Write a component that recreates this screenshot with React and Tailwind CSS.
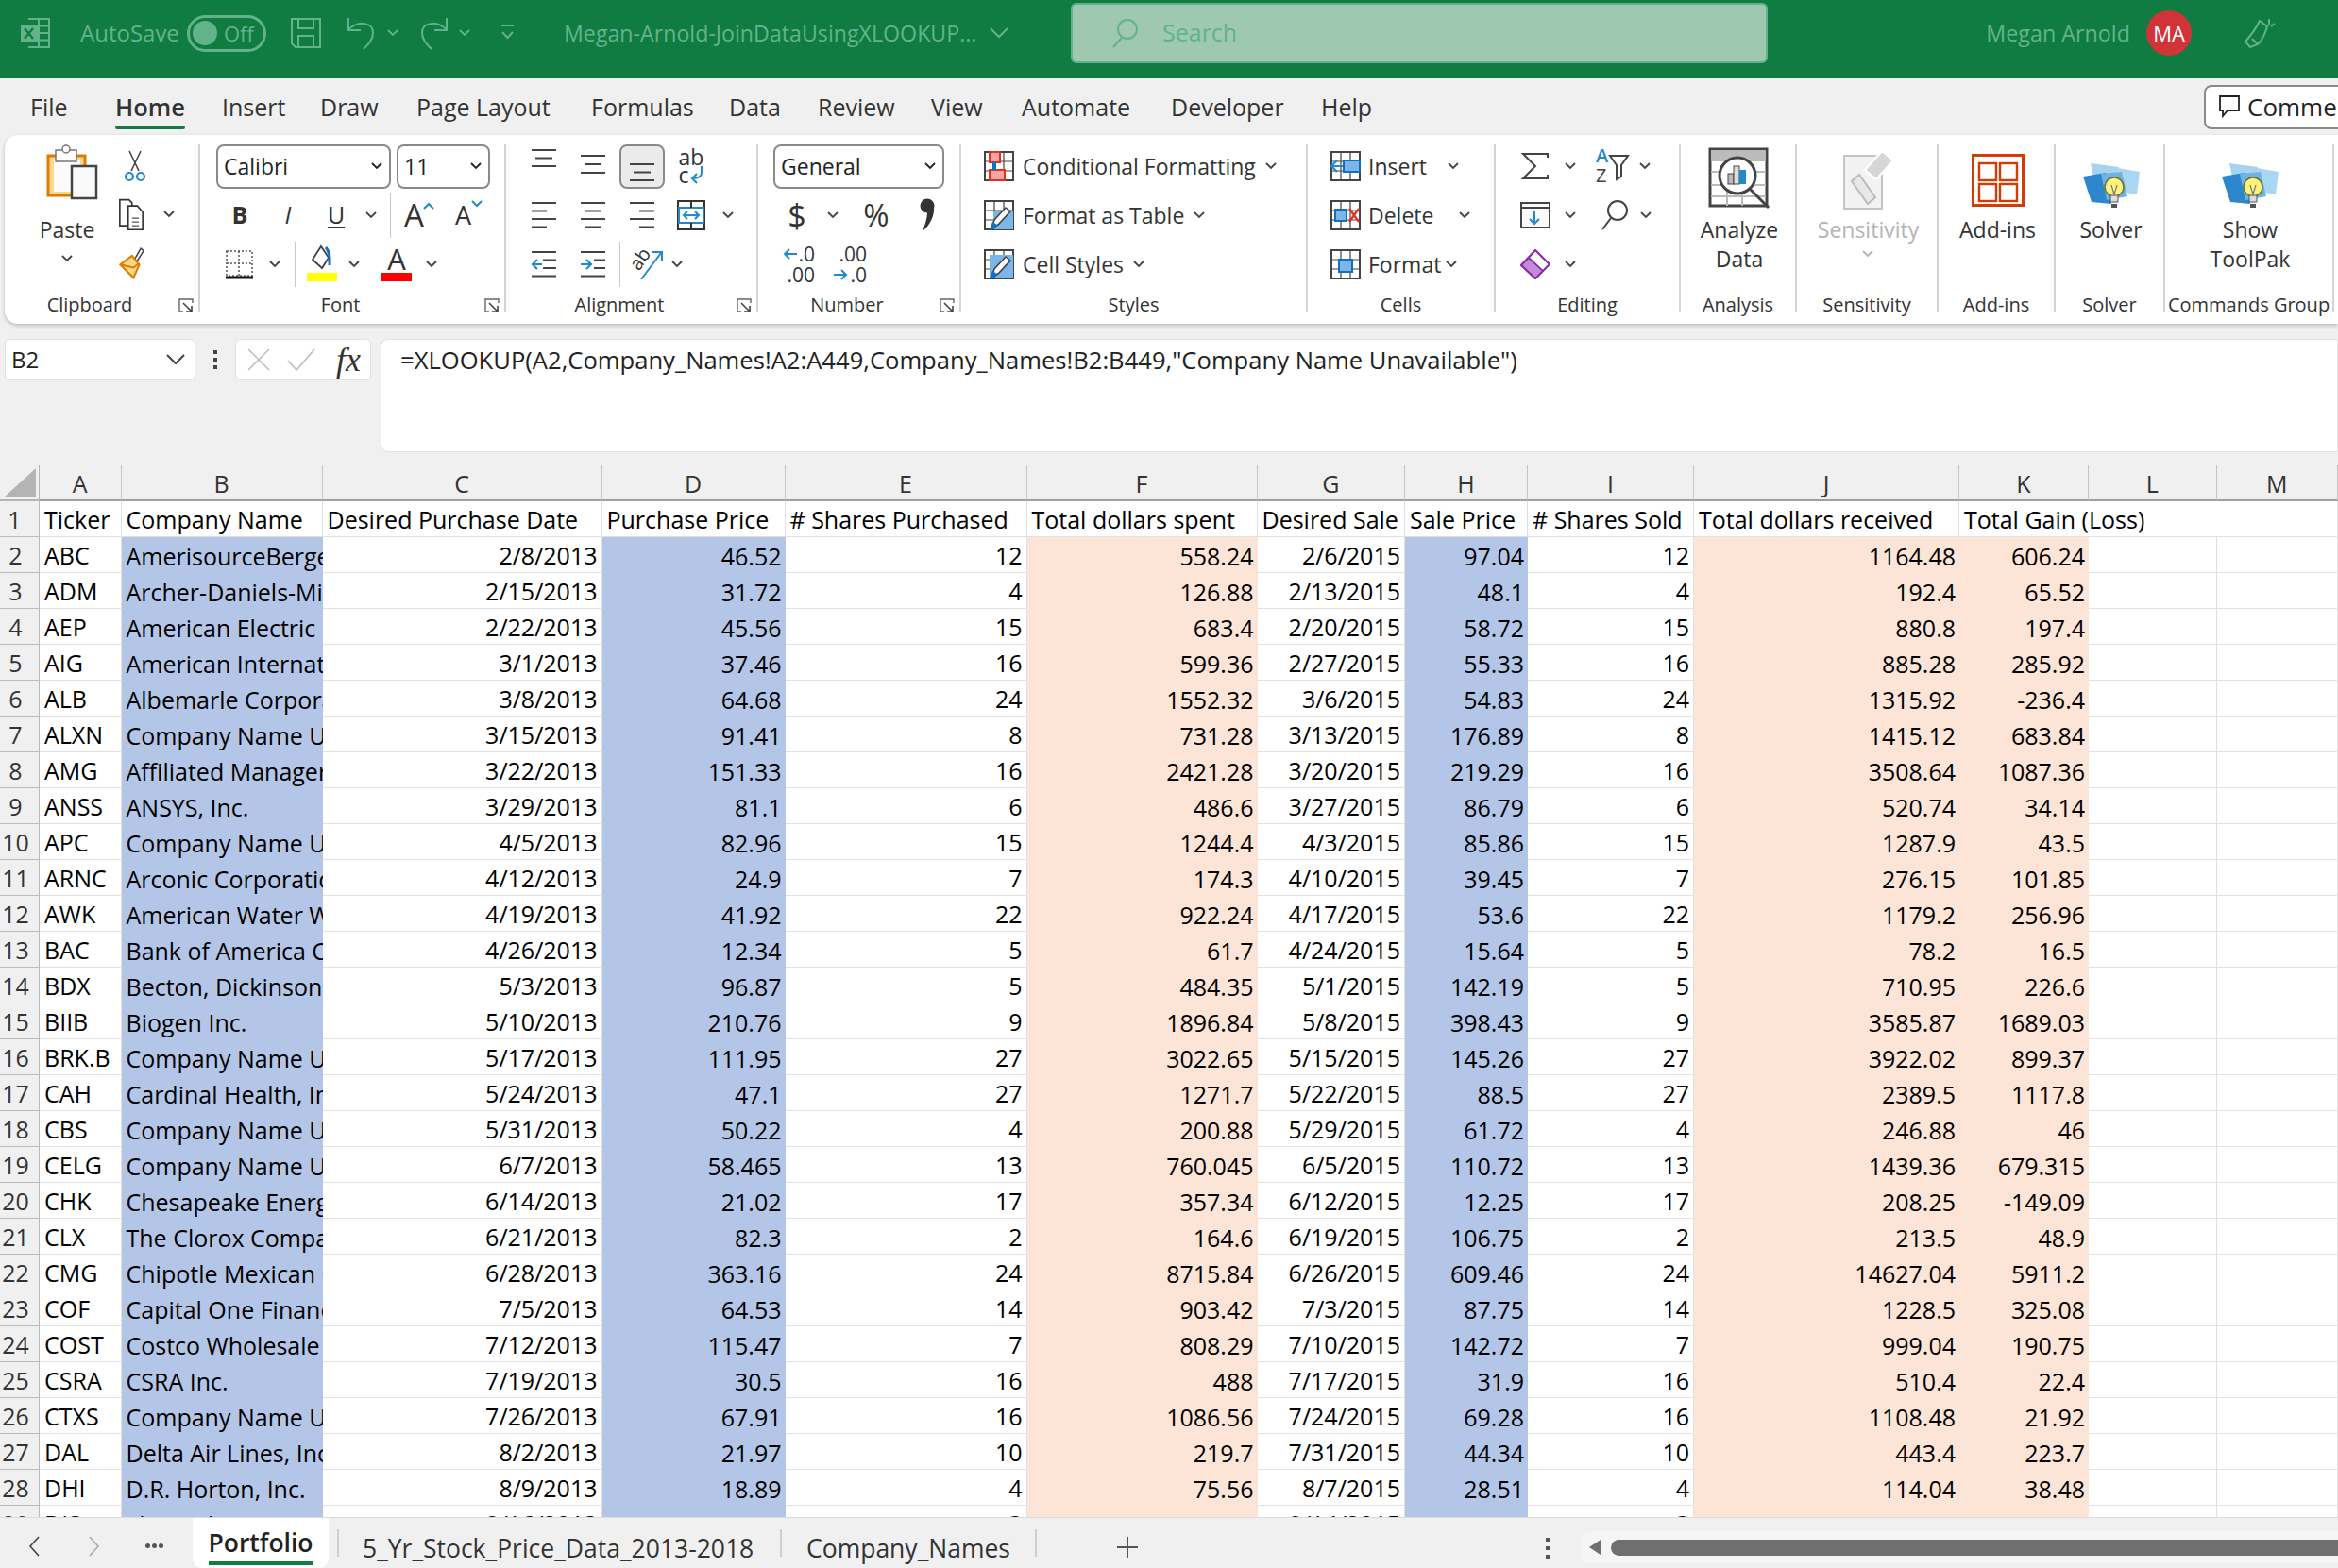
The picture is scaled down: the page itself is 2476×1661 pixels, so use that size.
import React from "react";

const dim = "#62b38c";
const ink = "#444444";
const blue = "#1e8bcd";

const data = `ABC|AmerisourceBergen Corp|2/8/2013|46.52|12|558.24|2/6/2015|97.04|12|1164.48|606.24
ADM|Archer-Daniels-Midland Co|2/15/2013|31.72|4|126.88|2/13/2015|48.1|4|192.4|65.52
AEP|American Electric Power|2/22/2013|45.56|15|683.4|2/20/2015|58.72|15|880.8|197.4
AIG|American International Group|3/1/2013|37.46|16|599.36|2/27/2015|55.33|16|885.28|285.92
ALB|Albemarle Corporation|3/8/2013|64.68|24|1552.32|3/6/2015|54.83|24|1315.92|-236.4
ALXN|Company Name Unavailable|3/15/2013|91.41|8|731.28|3/13/2015|176.89|8|1415.12|683.84
AMG|Affiliated Managers Group|3/22/2013|151.33|16|2421.28|3/20/2015|219.29|16|3508.64|1087.36
ANSS|ANSYS, Inc.|3/29/2013|81.1|6|486.6|3/27/2015|86.79|6|520.74|34.14
APC|Company Name Unavailable|4/5/2013|82.96|15|1244.4|4/3/2015|85.86|15|1287.9|43.5
ARNC|Arconic Corporation|4/12/2013|24.9|7|174.3|4/10/2015|39.45|7|276.15|101.85
AWK|American Water Works|4/19/2013|41.92|22|922.24|4/17/2015|53.6|22|1179.2|256.96
BAC|Bank of America Corp|4/26/2013|12.34|5|61.7|4/24/2015|15.64|5|78.2|16.5
BDX|Becton, Dickinson and Co|5/3/2013|96.87|5|484.35|5/1/2015|142.19|5|710.95|226.6
BIIB|Biogen Inc.|5/10/2013|210.76|9|1896.84|5/8/2015|398.43|9|3585.87|1689.03
BRK.B|Company Name Unavailable|5/17/2013|111.95|27|3022.65|5/15/2015|145.26|27|3922.02|899.37
CAH|Cardinal Health, Inc.|5/24/2013|47.1|27|1271.7|5/22/2015|88.5|27|2389.5|1117.8
CBS|Company Name Unavailable|5/31/2013|50.22|4|200.88|5/29/2015|61.72|4|246.88|46
CELG|Company Name Unavailable|6/7/2013|58.465|13|760.045|6/5/2015|110.72|13|1439.36|679.315
CHK|Chesapeake Energy|6/14/2013|21.02|17|357.34|6/12/2015|12.25|17|208.25|-149.09
CLX|The Clorox Company|6/21/2013|82.3|2|164.6|6/19/2015|106.75|2|213.5|48.9
CMG|Chipotle Mexican Grill|6/28/2013|363.16|24|8715.84|6/26/2015|609.46|24|14627.04|5911.2
COF|Capital One Financial|7/5/2013|64.53|14|903.42|7/3/2015|87.75|14|1228.5|325.08
COST|Costco Wholesale Corp|7/12/2013|115.47|7|808.29|7/10/2015|142.72|7|999.04|190.75
CSRA|CSRA Inc.|7/19/2013|30.5|16|488|7/17/2015|31.9|16|510.4|22.4
CTXS|Company Name Unavailable|7/26/2013|67.91|16|1086.56|7/24/2015|69.28|16|1108.48|21.92
DAL|Delta Air Lines, Inc.|8/2/2013|21.97|10|219.7|7/31/2015|44.34|10|443.4|223.7
DHI|D.R. Horton, Inc.|8/9/2013|18.89|4|75.56|8/7/2015|28.51|4|114.04|38.48
DIS|The Walt Disney Co|8/16/2013|81.07|3|195.76|8/14/2015|107.16|3|257.08|381.56`
  .split("\n")
  .map((r) => r.split("|"));

const headers = ["Ticker", "Company Name", "Desired Purchase Date", "Purchase Price", "# Shares Purchased", "Total dollars spent", "Desired Sale", "Sale Price", "# Shares Sold", "Total dollars received", "Total Gain (Loss)", "", ""];
const letters = ["A", "B", "C", "D", "E", "F", "G", "H", "I", "J", "K", "L", "M"];

const fills = {
  1: "bg-[#b4c6e7]",
  3: "bg-[#b4c6e7]",
  5: "bg-[#fce4d6]",
  7: "bg-[#b4c6e7]",
  9: "bg-[#fce4d6]",
  10: "bg-[#fce4d6]",
};

function Svg({ w, h, sw, sh, children, className }) {
  return (
    <svg width={sw || w} height={sh || h} viewBox={`0 0 ${w} ${h}`} fill="none" className={className}>
      {children}
    </svg>
  );
}

function Chev({ color = ink, className = "" }) {
  return (
    <Svg w={12} h={8} className={className}>
      <path d="M1 1l5 5 5-5" stroke={color} strokeWidth="1.8" />
    </Svg>
  );
}

function Launcher() {
  return (
    <Svg w={16} h={16}>
      <path d="M15 5V1H1v13h4" stroke="#666" strokeWidth="1.4" />
      <path d="M5 5l9 9M14 8v6H8" stroke="#444" strokeWidth="1.6" />
    </Svg>
  );
}

function Cell52({ w = 52, children }) {
  return <div style={{ width: w }} className="flex items-center justify-center shrink-0">{children}</div>;
}

function Sep() {
  return <div className="w-[1px] h-[48px] bg-[#c8c8c8] shrink-0" />;
}

function Group({ w, label, launcher, children }) {
  return (
    <div style={{ width: w }} className="shrink-0 h-[178px] my-[10px] border-r-2 border-[#d4d4d4] flex flex-col">
      <div className="flex-1 min-h-0">{children}</div>
      <div className="h-[26px] -mb-[5px] flex items-center text-[20px] text-[#333]">
        <div className="flex-1 text-center whitespace-nowrap">{label}</div>
        {launcher && <div className="w-[25px] shrink-0 pl-[4px] -mb-[2px]"><Launcher /></div>}
      </div>
    </div>
  );
}

function Rows({ children, className = "" }) {
  return <div className={`-mt-[3px] flex flex-col ${className}`}>{children}</div>;
}

function Row({ children, className = "" }) {
  return <div className={`h-[52px] flex items-center ${className}`}>{children}</div>;
}

function Select({ w, text }) {
  return (
    <div style={{ width: w }} className="h-[47px] shrink-0 flex items-center justify-between pl-[6px] pr-[7px] border-2 border-[#8a8a8a] rounded-[8px] bg-white text-[23px] text-[#222]">
      <span>{text}</span>
      <Chev color="#222" />
    </div>
  );
}

function AlignLines({ ys, xs, color = ink }) {
  return (
    <Svg w={30} h={44}>
      {ys.map((y, i) => (
        <path key={i} d={`M${xs[i][0]} ${y}H${xs[i][1]}`} stroke={color} strokeWidth="2.2" />
      ))}
    </Svg>
  );
}

function BigGrid({ type }) {
  // small 32px table icons used in the Styles and Cells groups
  return (
    <Svg w={32} h={32}>
      <path d="M1 1h30v30H1z" stroke={ink} strokeWidth="2" fill="#fff" />
      <path d="M1 11h30M1 21h30M11 1v30M21 1v30" stroke={ink} strokeWidth="1.2" />
      {type === "cf" && (
        <>
          <rect x="6" y="1" width="11" height="11" fill="#f8a5a5" stroke="#e0301e" strokeWidth="2" />
          <rect x="6" y="20" width="16" height="11" fill="#f8a5a5" stroke="#e0301e" strokeWidth="2" />
          <path d="M11 12v8" stroke="#1071c4" strokeWidth="4" />
        </>
      )}
      {type === "table" && (
        <>
          <path d="M10 11h21v20H10z" fill="#7cb6e8" />
          <path d="M8 30l3-9 12-13 5 4-13 14z" fill="#fff" stroke={ink} strokeWidth="1.6" />
          <path d="M6 31l3-8 5 3-3 5z" fill="#1071c4" />
        </>
      )}
      {type === "style" && (
        <>
          <path d="M6 6h25v25H6z" fill="#7cb6e8" />
          <path d="M8 30l3-9 12-13 5 4-13 14z" fill="#fff" stroke={ink} strokeWidth="1.6" />
          <path d="M6 31l3-8 5 3-3 5z" fill="#1071c4" />
        </>
      )}
      {type === "insert" && (
        <>
          <rect x="14" y="10" width="17" height="12" fill="#7cb6e8" stroke="#1071c4" strokeWidth="2" />
          <path d="M13 16H2M7 10l-6 6 6 6" stroke={blue} strokeWidth="2.2" fill="#fff" />
        </>
      )}
      {type === "delete" && (
        <>
          <rect x="5" y="10" width="12" height="12" fill="#7cb6e8" stroke="#1071c4" strokeWidth="2" />
          <path d="M20 9l10 14M30 9L20 23" stroke="#e0301e" strokeWidth="2.2" />
        </>
      )}
      {type === "format" && (
        <>
          <rect x="9" y="11" width="14" height="13" fill="#7cb6e8" stroke="#1071c4" strokeWidth="2" />
          <path d="M6 -1h20" stroke={blue} strokeWidth="2" />
        </>
      )}
    </Svg>
  );
}

function SolverIcon() {
  return (
    <Svg w={62} h={50}>
      <path d="M9 1l30 4-1 10H12z" fill="#a7d3f0" />
      <path d="M38 6l23 4-3 24-18-3z" fill="#a9d6f3" />
      <path d="M1 15l24-4 6 33-21-2z" fill="#2e86cc" />
      <path d="M20 12l22-2 6 26-22 4z" fill="#6cb4e4" />
      <circle cx="34" cy="26" r="10" fill="#fff27a" stroke="#6d6d3a" strokeWidth="1.5" />
      <path d="M30 35v7h8v-7z" fill="#ddd" stroke="#555" />
      <path d="M31 44h6v4h-6z" fill="#555" />
      <path d="M31 24l3 10 3-10" stroke="#777" strokeWidth="1.2" />
    </Svg>
  );
}

function ColButton({ icon, lines, gray, chev }) {
  return (
    <div className="h-full flex flex-col items-center pl-[3px]">
      <div className="h-[69px] flex items-end justify-center">{icon}</div>
      <div className={`mt-[6px] text-center text-[23px] leading-[31px] whitespace-nowrap ${gray ? "text-[#b4b4b4]" : "text-[#333]"}`}>
        {lines.map((l) => (
          <div key={l}>{l}</div>
        ))}
        {chev && <div className="flex justify-center mt-[6px]"><Chev color="#b4b4b4" /></div>}
      </div>
    </div>
  );
}

function TitleBar() {
  return (
    <div className="h-[83px] bg-[#107c41] flex items-center pb-[13px] shrink-0 text-[24px] text-[#62b38c]">
      <div className="w-[85px] pl-[21px] shrink-0">
        <Svg w={32} h={32}>
          <path d="M9 1h22v30H9" stroke={dim} strokeWidth="2" />
          <path d="M20 1v30M20 8.5h11M20 16h11M20 23.5h11" stroke={dim} strokeWidth="2" />
          <rect x="1" y="7" width="18" height="18" fill={dim} />
          <path d="M5 11l9 11M14 11L5 22" stroke="#107c41" strokeWidth="2.4" />
        </Svg>
      </div>
      <div className="w-[113px] shrink-0 whitespace-nowrap">AutoSave</div>
      <div className="w-[84px] h-[39px] shrink-0 rounded-full border-[3px] border-[#62b38c] flex items-center pl-[3px] gap-[7px] text-[22px]">
        <div className="w-[26px] h-[26px] rounded-full bg-[#62b38c]" />
        <span>Off</span>
      </div>
      <div className="ml-[26px] shrink-0">
        <Svg w={32} h={32}>
          <path d="M1 1h30v30H5l-4-4z" stroke={dim} strokeWidth="2" />
          <path d="M8 1v10h16V1M8 31V19h16v12" stroke={dim} strokeWidth="2" />
        </Svg>
      </div>
      <div className="ml-[27px] shrink-0">
        <Svg w={30} h={36}>
          <path d="M2 2v13h13M2 15C8 6 28 4 28 18c0 7-5 12-10 17" stroke={dim} strokeWidth="2" />
        </Svg>
      </div>
      <Chev color={dim} className="ml-[13px] shrink-0" />
      <div className="ml-[23px] shrink-0">
        <Svg w={30} h={36}>
          <path d="M28 2v13H15M28 15C22 6 2 4 2 18c0 7 5 12 10 17" stroke={dim} strokeWidth="2" />
        </Svg>
      </div>
      <Chev color={dim} className="ml-[11px] shrink-0" />
      <div className="ml-[32px] shrink-0">
        <Svg w={15} h={18}>
          <path d="M1 1h13M2 8l5.5 6L13 8" stroke={dim} strokeWidth="2" />
        </Svg>
      </div>
      <div className="ml-[52px] w-[436px] shrink-0 whitespace-nowrap text-[23.2px]">Megan-Arnold-JoinDataUsingXLOOKUP...</div>
      <Svg w={20} h={12} className="ml-[15px] shrink-0">
        <path d="M1 1l9 9 9-9" stroke={dim} strokeWidth="2" />
      </Svg>
      <div className="ml-[66px] w-[738px] h-[64px] shrink-0 rounded-[6px] bg-[#9fc8b0] border-2 border-[#62b38c] flex items-center pl-[42px] text-[#62b38c] text-[25px]">
        <Svg w={28} h={32}>
          <circle cx="16" cy="12" r="10" stroke={dim} strokeWidth="2" />
          <path d="M10 21L1 31" stroke={dim} strokeWidth="2" />
        </Svg>
        <span className="ml-[25px]">Search</span>
      </div>
      <div className="ml-auto flex items-center shrink-0">
        <span className="whitespace-nowrap text-[23.3px]">Megan Arnold</span>
        <div className="ml-[17px] w-[48px] h-[48px] rounded-full bg-[#d13438] text-white text-[22px] flex items-center justify-center">MA</div>
        <div className="ml-[55px] mr-[66px]">
          <Svg w={34} h={32}>
            <path d="M2 25l5 6 8-3c5-5 8-11 10-19l-8-6C13 12 8 18 2 25z" stroke={dim} strokeWidth="2" />
            <path d="M9 22l6 6M27 1v6M33 6l-4 3" stroke={dim} strokeWidth="2" />
          </Svg>
        </div>
      </div>
    </div>
  );
}

const tabs = [
  ["File", 90],
  ["Home", 113],
  ["Insert", 104],
  ["Draw", 102],
  ["Page Layout", 185],
  ["Formulas", 146],
  ["Data", 94],
  ["Review", 120],
  ["View", 96],
  ["Automate", 158],
  ["Developer", 159],
  ["Help", 100],
];

function TabRow() {
  return (
    <div className="h-[60px] shrink-0 flex items-center pl-[32px] text-[25px] text-[#333]">
      {tabs.map(([t, w]) => (
        <div key={t} style={{ width: w }} className="shrink-0">
          <span className="inline-flex flex-col pt-[6px] whitespace-nowrap">
            <span className={t === "Home" ? "font-semibold text-[25.6px]" : ""}>{t}</span>
            <span className={`h-[4px] rounded-full ${t === "Home" ? "bg-[#107c41]" : ""}`} />
          </span>
        </div>
      ))}
      <div className="ml-auto -mr-[20px] w-[162px] h-[47px] rounded-l-[8px] border-2 border-[#8a8a8a] bg-white flex items-center pl-[14px] gap-[8px] text-[#222] text-[26px] whitespace-nowrap overflow-hidden shrink-0">
        <Svg w={22} h={24} className="shrink-0">
          <path d="M1 1h20v15H9l-5 6v-6H1z" stroke="#222" strokeWidth="1.8" />
        </Svg>
        Comments
      </div>
    </div>
  );
}

function Ribbon() {
  return (
    <div className="ml-[5px] h-[200px] shrink-0 rounded-l-[14px] bg-white shadow-[0_2px_4px_rgba(0,0,0,0.22)] flex text-[23px] text-[#333] overflow-hidden">
      <Group w={207} label="Clipboard" launcher>
        <div className="flex h-[150px]">
          <div className="w-[115px] pl-[35px] flex flex-col items-start">
            <div className="h-[58px] -mt-[1px] pl-[9px]">
              <Svg w={55} h={60}>
                <path d="M2 13h39v42H2z" fill="#fbd88a" stroke="#e07b00" strokeWidth="3" />
                <path d="M8 17h28v34H8z" fill="#fbfbfb" />
                <path d="M10 7h22v12H10z" fill="#fff" stroke="#777" strokeWidth="1.5" />
                <circle cx="21" cy="6" r="4" fill="#fff" stroke="#777" strokeWidth="1.5" />
                <path d="M27 24h26v34H27z" fill="#f9f9f9" stroke="#444" strokeWidth="2.5" />
              </Svg>
            </div>
            <div className="mt-[18px] w-[62px] text-center leading-[30px]">Paste</div>
            <div className="w-[62px] flex justify-center mt-[12px]"><Chev /></div>
          </div>
          <Rows className="ml-[3px]">
            <Row>
              <Svg w={24} h={34} className="ml-[8px]">
                <path d="M6 1l10 21M18 1L8 22" stroke="#444" strokeWidth="1.6" />
                <circle cx="6" cy="28" r="4" stroke={blue} strokeWidth="2.2" />
                <circle cx="18" cy="28" r="4" stroke={blue} strokeWidth="2.2" />
              </Svg>
            </Row>
            <Row>
              <Svg w={34} h={42} sw={28} sh={34} className="ml-[2px]">
                <path d="M15 36H2V2h12l4 4v4" stroke="#333" strokeWidth="2" />
                <path d="M13 10h12l7 8v23H13z" fill="#fff" stroke="#333" strokeWidth="2" />
                <path d="M18 26h9M18 31h9M18 36h9" stroke="#555" strokeWidth="1.6" />
              </Svg>
              <Chev className="ml-[20px]" />
            </Row>
            <Row>
              <Svg w={36} h={46} sw={28} sh={36} className="ml-[2px]">
                <path d="M23 18l8-14 4 3-9 14" fill="#fff" stroke="#444" strokeWidth="2" />
                <path d="M3 26l16-12 10 12-8 18z" fill="#fbd88a" stroke="#e07b00" strokeWidth="2.6" />
                <path d="M3 26l18 4 8-6" stroke="#e07b00" strokeWidth="2.6" />
              </Svg>
            </Row>
          </Rows>
        </div>
      </Group>

      <Group w={324} label="Font" launcher>
        <Rows className="pl-[17px]">
          <Row className="gap-[6px]">
            <Select w={185} text="Calibri" />
            <Select w={99} text="11" />
          </Row>
          <Row>
            <div className="w-[50px] text-center font-bold text-[25px]">B</div>
            <div className="w-[52px] text-center italic text-[25px]">I</div>
            <div className="w-[50px] text-center underline underline-offset-[3px] text-[25px]">U</div>
            <Chev className="ml-[6px]" />
            <div className="ml-[14px]"><Sep /></div>
            <div className="ml-[14px] w-[40px] flex items-start text-[33px] leading-[40px]">A<Svg w={12} h={8} className="mt-[6px] -ml-[1px]"><path d="M1 7l5-5 5 5" stroke={blue} strokeWidth="2" /></Svg></div>
            <div className="ml-[14px] w-[40px] flex items-start text-[27px] leading-[40px]">A<Svg w={12} h={8} className="mt-[4px]"><path d="M1 1l5 5 5-5" stroke={blue} strokeWidth="2" /></Svg></div>
          </Row>
          <Row>
            <div className="w-[44px] flex justify-center pl-[3px]">
              <Svg w={30} h={32}>
                <path d="M2 2h27v26H2z" stroke="#555" strokeWidth="1.5" strokeDasharray="2 2" />
                <path d="M15 2v26M2 15h27" stroke="#555" strokeWidth="1.5" strokeDasharray="2 2" />
                <path d="M1 30h29" stroke="#111" strokeWidth="3" />
              </Svg>
            </div>
            <Chev className="ml-[12px]" />
            <div className="ml-[15px]"><Sep /></div>
            <div className="ml-[12px] flex flex-col items-center mb-[4px]">
              <Svg w={32} h={30}>
                <path d="M6 16l9-14 8 12-7 11z" fill="#fff" stroke="#444" strokeWidth="1.8" />
                <path d="M20 3c5 6 4 12 4 19" stroke="#1071c4" strokeWidth="3" />
              </Svg>
              <div className="w-[32px] h-[9px] bg-[#ffff00]" />
            </div>
            <Chev className="ml-[12px]" />
            <div className="ml-[23px] flex flex-col items-center mb-[4px]">
              <div className="text-[31px] leading-[30px] h-[30px]">A</div>
              <div className="w-[32px] h-[9px] bg-[#ff0000]" />
            </div>
            <Chev className="ml-[15px]" />
          </Row>
        </Rows>
      </Group>

      <Group w={267} label="Alignment" launcher>
        <Rows className="pl-[14px]">
          <Row>
            <Cell52><AlignLines ys={[5, 13.5, 22]} xs={[[2, 28], [6, 24], [2, 28]]} /></Cell52>
            <Cell52><AlignLines ys={[11, 20, 29]} xs={[[2, 28], [6, 24], [2, 28]]} /></Cell52>
            <Cell52>
              <div className="w-[48px] h-[47px] rounded-[8px] border-2 border-[#8a8a8a] bg-[#ebebeb] flex items-center justify-center">
                <AlignLines ys={[20, 28.5, 37]} xs={[[2, 28], [6, 24], [2, 28]]} />
              </div>
            </Cell52>
            <Cell52>
              <div className="flex flex-col items-start leading-[18px] text-[23px]">
                <span>ab</span>
                <span className="flex items-center">c
                  <Svg w={16} h={20}><path d="M13 1v7c0 4-3 6-10 6M8 9l-5 5 5 5" stroke={blue} strokeWidth="2" /></Svg>
                </span>
              </div>
            </Cell52>
          </Row>
          <Row>
            <Cell52><AlignLines ys={[9, 17.5, 26, 34.5]} xs={[[2, 28], [2, 18], [2, 28], [2, 18]]} /></Cell52>
            <Cell52><AlignLines ys={[9, 17.5, 26, 34.5]} xs={[[2, 28], [7, 23], [2, 28], [7, 23]]} /></Cell52>
            <Cell52><AlignLines ys={[9, 17.5, 26, 34.5]} xs={[[2, 28], [12, 28], [2, 28], [12, 28]]} /></Cell52>
            <Cell52>
              <Svg w={30} h={32}>
                <rect x="1" y="1" width="28" height="30" stroke="#333" strokeWidth="2" />
                <rect x="2" y="8" width="26" height="16" fill="#fff" stroke={blue} strokeWidth="2" />
                <path d="M7 16h16M11 12l-4 4 4 4M19 12l4 4-4 4" stroke={blue} strokeWidth="2" />
                <path d="M15 1v7M15 24v7" stroke="#333" strokeWidth="2" />
              </Svg>
            </Cell52>
            <Chev className="ml-[7px]" />
          </Row>
          <Row>
            <Cell52>
              <Svg w={30} h={44}>
                <path d="M2 9h26M14 17.5h14M14 26h14M2 34.5h26" stroke={ink} strokeWidth="2.2" />
                <path d="M13 22H3M8 17l-5 5 5 5" stroke={blue} strokeWidth="2.2" />
              </Svg>
            </Cell52>
            <Cell52>
              <Svg w={30} h={44}>
                <path d="M2 9h26M16 17.5h12M16 26h12M2 34.5h26" stroke={ink} strokeWidth="2.2" />
                <path d="M2 22h11M8 17l5 5-5 5" stroke={blue} strokeWidth="2.2" />
              </Svg>
            </Cell52>
            <div className="ml-[2px]"><Sep /></div>
            <div className="ml-[11px] flex">
              <Svg w={36} h={34}>
                <text x="2" y="20" transform="rotate(-55 10 16)" fontSize="20" fill="#333">ab</text>
                <path d="M11 33L32 5M23 4h10v10" stroke={blue} strokeWidth="2" />
              </Svg>
            </div>
            <Chev className="ml-[7px]" />
          </Row>
        </Rows>
      </Group>

      <Group w={215} label="Number" launcher>
        <Rows className="pl-[16px]">
          <Row><Select w={181} text="General" /></Row>
          <Row>
            <div className="w-[50px] text-center text-[34px]">$</div>
            <Chev className="ml-[7px]" />
            <div className="ml-[12px] w-[56px] text-center text-[33px]">%</div>
            <div className="ml-[2px] w-[48px] flex justify-center">
              <Svg w={18} h={38}>
                <circle cx="9" cy="9" r="7.5" fill="#333" />
                <path d="M16 9c1 11-4 20-12 27 3-8 5-14 5-20z" fill="#333" />
              </Svg>
            </div>
          </Row>
          <Row>
            <div className="-ml-[2px] w-[46px] flex flex-col items-end text-[21px] leading-[22px]">
              <span className="flex items-center">
                <Svg w={16} h={14}><path d="M15 7H2M7 2L2 7l5 5" stroke={blue} strokeWidth="2" /></Svg>
                .0
              </span>
              <span>.00</span>
            </div>
            <div className="ml-[9px] w-[46px] flex flex-col items-end text-[21px] leading-[22px]">
              <span>.00</span>
              <span className="flex items-center">
                <Svg w={18} h={14}><path d="M1 7h13M9 2l5 5-5 5" stroke={blue} strokeWidth="2" /></Svg>
                .0
              </span>
            </div>
          </Row>
        </Rows>
      </Group>

      <Group w={367} label="Styles">
        <Rows className="pl-[24px] text-[23px]">
          <Row><BigGrid type="cf" /><span className="ml-[9px] mr-[10px] whitespace-nowrap">Conditional Formatting</span><Chev /></Row>
          <Row><BigGrid type="table" /><span className="ml-[9px] mr-[10px] whitespace-nowrap">Format as Table</span><Chev /></Row>
          <Row><BigGrid type="style" /><span className="ml-[9px] mr-[10px] whitespace-nowrap">Cell Styles</span><Chev /></Row>
        </Rows>
      </Group>

      <Group w={199} label="Cells">
        <Rows className="pl-[24px] text-[23px]">
          <Row><BigGrid type="insert" /><span className="ml-[8px] w-[84px]">Insert</span><Chev /></Row>
          <Row><BigGrid type="delete" /><span className="ml-[8px] w-[96px]">Delete</span><Chev /></Row>
          <Row><BigGrid type="format" /><span className="ml-[8px] w-[82px] whitespace-nowrap">Format</span><Chev /></Row>
        </Rows>
      </Group>

      <Group w={196} label="Editing">
        <Rows className="pl-[26px]">
          <Row>
            <Svg w={32} h={30}><path d="M29 6V2H3l13 13L3 28h26v-4" stroke={ink} strokeWidth="2" /></Svg>
            <Chev className="ml-[15px]" />
            <Svg w={36} h={38} className="ml-[21px]">
              <text x="0" y="15" fontSize="20" fill={blue} fontWeight="600">A</text>
              <text x="0" y="36" fontSize="20" fill="#444">Z</text>
              <path d="M15 8h19l-7 10v12l-5 3V18z" stroke={ink} strokeWidth="2" />
            </Svg>
            <Chev className="ml-[10px]" />
          </Row>
          <Row>
            <Svg w={32} h={28}>
              <path d="M1 1h30v26H1zM1 6h30" stroke={ink} strokeWidth="2" fill="#fafafa" />
              <path d="M15 9v14M10 18l5 5 5-5" stroke={blue} strokeWidth="2" />
            </Svg>
            <Chev className="ml-[15px]" />
            <Svg w={30} h={32} className="ml-[26px]">
              <circle cx="18" cy="11" r="10" stroke={ink} strokeWidth="2" />
              <path d="M11 19L2 31" stroke={ink} strokeWidth="2" />
            </Svg>
            <Chev className="ml-[12px]" />
          </Row>
          <Row>
            <Svg w={32} h={32}>
              <path d="M1 17L16 1l15 15-15 15z" fill="#fff" stroke="#8a2da8" strokeWidth="2.2" />
              <path d="M1 17l8-8 15 14-8 8z" fill="#c58ad8" stroke="#8a2da8" strokeWidth="1.8" />
            </Svg>
            <Chev className="ml-[15px]" />
          </Row>
        </Rows>
      </Group>

      <Group w={123} label="Analysis">
        <ColButton
          lines={["Analyze", "Data"]}
          icon={
            <Svg w={66} h={66}>
              <rect x="2" y="2" width="60" height="60" fill="#fff" stroke="#444" strokeWidth="3" />
              <path d="M3 3h58v12H3z" fill="#bbb" />
              <path d="M3 26h58M3 40h58M3 52h58M20 40v22M36 40v22" stroke="#bbb" strokeWidth="2" />
              <circle cx="31" cy="30" r="19" fill="#fff" stroke="#444" strokeWidth="3" />
              <path d="M44 44l20 20" stroke="#444" strokeWidth="3" />
              <rect x="21" y="28" width="6" height="11" fill="#bbb" stroke="#444" />
              <rect x="27" y="20" width="6" height="19" fill="#ddd" stroke="#444" />
              <rect x="33" y="24" width="7" height="15" fill="#1e8bcd" />
            </Svg>
          }
        />
      </Group>

      <Group w={150} label="Sensitivity">
        <ColButton
          gray
          chev
          lines={["Sensitivity"]}
          icon={
            <Svg w={56} h={66}>
              <rect x="2" y="9" width="40" height="56" fill="#f2f2f2" stroke="#c4c4c4" strokeWidth="2" />
              <path d="M24 24L42 4l12 10-18 20z" fill="#d6d6d6" stroke="#fff" strokeWidth="2" />
              <path d="M10 36l8-7 17 24-8 7z" fill="#e8e8e8" stroke="#bbb" strokeWidth="2" />
            </Svg>
          }
        />
      </Group>

      <Group w={124} label="Add-ins">
        <ColButton
          lines={["Add-ins"]}
          icon={
            <div className="pb-[3px]">
              <Svg w={56} h={56}>
                <rect x="1.5" y="1.5" width="53" height="53" stroke="#d83b01" strokeWidth="3" />
                <rect x="8" y="10" width="18" height="18" stroke="#d83b01" strokeWidth="2.4" />
                <rect x="30" y="10" width="18" height="18" stroke="#d83b01" strokeWidth="2.4" />
                <rect x="8" y="32" width="18" height="18" stroke="#d83b01" strokeWidth="2.4" />
                <rect x="30" y="32" width="18" height="18" stroke="#d83b01" strokeWidth="2.4" />
              </Svg>
            </div>
          }
        />
      </Group>

      <Group w={116} label="Solver">
        <ColButton lines={["Solver"]} icon={<SolverIcon />} />
      </Group>

      <Group w={179} label="Commands Group">
        <ColButton lines={["Show", "ToolPak"]} icon={<SolverIcon />} />
      </Group>
    </div>
  );
}

function FormulaBar() {
  return (
    <div className="h-[150px] shrink-0 pl-[5px] pt-[16px] flex items-start text-[25.6px]">
      <div className="w-[202px] h-[44px] shrink-0 bg-white rounded-[6px] border border-[#e1e1e1] flex items-center justify-between pl-[6px] pr-[10px] text-[#222] text-[24px]">
        B2
        <Svg w={20} h={12}><path d="M1 1l9 9 9-9" stroke="#444" strokeWidth="2" /></Svg>
      </div>
      <div className="w-[42px] h-[44px] shrink-0 flex flex-col items-center justify-center gap-[4px]">
        <div className="w-[4px] h-[4px] bg-[#444]" />
        <div className="w-[4px] h-[4px] bg-[#444]" />
        <div className="w-[4px] h-[4px] bg-[#444]" />
      </div>
      <div className="w-[144px] h-[44px] shrink-0 bg-white rounded-[6px] border border-[#e1e1e1] flex items-center pl-[11px]">
        <Svg w={26} h={26}><path d="M2 2l22 22M24 2L2 24" stroke="#bdbdbd" strokeWidth="1.6" /></Svg>
        <Svg w={32} h={26} className="ml-[16px]"><path d="M2 14l9 10L30 2" stroke="#bdbdbd" strokeWidth="1.6" /></Svg>
        <span className="ml-[21px] italic font-['Liberation_Serif',serif] text-[36px] leading-[40px] text-[#333]">fx</span>
      </div>
      <div className="ml-[10px] flex-1 h-[120px] bg-white rounded-l-[8px] border border-[#e1e1e1] pl-[20px] pt-[3px] text-[#222] whitespace-nowrap">
        =XLOOKUP(A2,Company_Names!A2:A449,Company_Names!B2:B449,"Company Name Unavailable")
      </div>
    </div>
  );
}

function Sheet() {
  const gridClass = "grid grid-cols-[42px_86.5px_213px_296px_194px_256px_244px_156.5px_130px_176px_281px_137px_135.5px_1fr] auto-rows-[38px] text-[25px] text-black";
  return (
    <div className="flex-1 min-h-0 overflow-hidden bg-white">
      <div className={gridClass}>
        <div className="bg-[#f0f0f0] border-r border-b-2 border-[#b5b5b5] flex items-end justify-end pb-[3px] pr-[3px]">
          <Svg w={33} h={30}><path d="M33 0v30H0z" fill="#b4b4b4" /></Svg>
        </div>
        {letters.map((l, i) => (
          <div key={i} className="bg-[#f0f0f0] border-r border-b-2 border-r-[#c4c4c4] border-b-[#a0a0a0] flex items-center justify-center text-[#333] pt-[4px]">{l}</div>
        ))}

        <div className="bg-[#f0f0f0] border-r border-b border-[#bcbcbc] flex items-center justify-center pr-[10px] pt-[3px] text-[#333]">1</div>
        {headers.map((h, i) => (
          <div key={i} className={`border-b border-[#e1e1e1] flex items-center pl-[5px] pt-[3px] whitespace-nowrap ${i === 10 || i === 11 ? "" : "border-r"}`}>{h}</div>
        ))}

        {data.map((r, ri) => (
          <React.Fragment key={ri}>
            <div className="bg-[#f0f0f0] border-r border-b border-[#bcbcbc] flex items-center justify-center pr-[8px] pt-[3px] text-[#333]">{ri + 2}</div>
            {letters.map((_, ci) => {
              const v = r[ci] || "";
              const left = ci < 2;
              return (
                <div
                  key={ci}
                  className={`overflow-hidden whitespace-nowrap flex items-center pt-[3px] ${left ? "pl-[5px]" : "justify-end pr-[4px]"} ${fills[ci] || "border-r border-b border-[#e1e1e1]"}`}
                >
                  {v}
                </div>
              );
            })}
          </React.Fragment>
        ))}
      </div>
    </div>
  );
}

function BottomBar() {
  return (
    <div className="h-[54px] shrink-0 bg-[#f0f0f0] border-t border-[#dcdcdc] flex text-[26.5px] text-[#333]">
      <div className="w-[204px] shrink-0 flex items-center pl-[30px] pt-[6px]">
        <Svg w={12} h={22}><path d="M11 1L2 11l9 10" stroke="#444" strokeWidth="1.6" /></Svg>
        <Svg w={12} h={22} className="ml-[52px]"><path d="M1 1l9 10-9 10" stroke="#aaa" strokeWidth="1.6" /></Svg>
        <div className="ml-[48px] flex gap-[2px]">
          <div className="w-[5px] h-[5px] rounded-full bg-[#555]" />
          <div className="w-[5px] h-[5px] rounded-full bg-[#555]" />
          <div className="w-[5px] h-[5px] rounded-full bg-[#555]" />
        </div>
      </div>
      <div className="w-[144px] shrink-0 bg-white rounded-b-[10px] flex flex-col items-center pt-[8px] text-[#222]">
        <span className="font-semibold leading-[36px]">Portfolio</span>
        <div className="w-[111px] h-[4px] bg-[#107c41] mt-[2px]" />
      </div>
      <div className="ml-[9px] my-[12px] w-[2px] bg-[#cfcfcf] shrink-0" />
      <div className="w-[467px] shrink-0 pl-[25px] pt-[13px] whitespace-nowrap">5_Yr_Stock_Price_Data_2013-2018</div>
      <div className="my-[12px] w-[2px] bg-[#cfcfcf] shrink-0" />
      <div className="w-[268px] shrink-0 pl-[26px] pt-[13px] whitespace-nowrap">Company_Names</div>
      <div className="my-[12px] w-[2px] bg-[#cfcfcf] shrink-0" />
      <div className="ml-[85px] pt-[20px] shrink-0">
        <Svg w={22} h={22}><path d="M11 0v22M0 11h22" stroke="#555" strokeWidth="2" /></Svg>
      </div>
      <div className="ml-[432px] pt-[21px] shrink-0 flex flex-col gap-[5px]">
        <div className="w-[4px] h-[4px] bg-[#555]" />
        <div className="w-[4px] h-[4px] bg-[#555]" />
        <div className="w-[4px] h-[4px] bg-[#555]" />
      </div>
      <div className="ml-[33px] mt-[14px] h-[34px] flex-1 rounded-l-[10px] bg-[#f5f5f5] flex items-center pl-[9px]">
        <Svg w={12} h={16}><path d="M12 0v16L0 8z" fill="#6f6f6f" /></Svg>
        <div className="ml-[11px] flex-1 h-[17px] rounded-l-full bg-[#6f6f6f]" />
      </div>
    </div>
  );
}

export default function App() {
  return (
    <div className="w-[2476px] h-[1661px] overflow-hidden bg-[#f0f0f0] flex flex-col font-['Open_Sans',sans-serif]">
      <TitleBar />
      <TabRow />
      <Ribbon />
      <FormulaBar />
      <Sheet />
      <BottomBar />
    </div>
  );
}
